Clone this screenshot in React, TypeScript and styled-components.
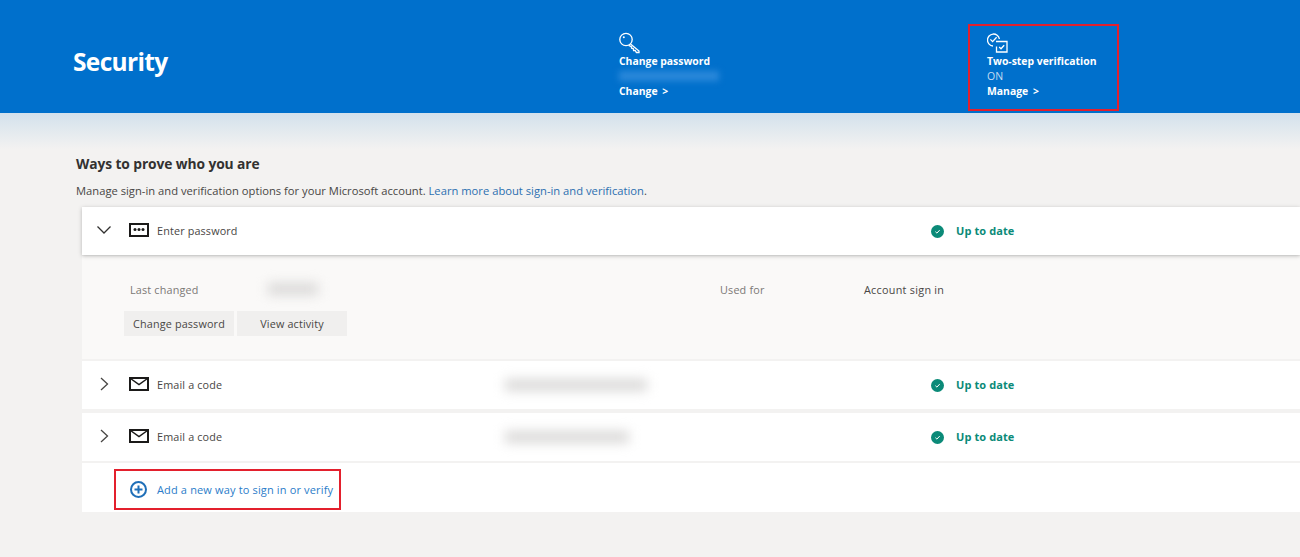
import styled, { createGlobalStyle } from 'styled-components'

const GlobalStyle = createGlobalStyle`
  html, body {
    margin: 0;
    padding: 0;
    background: #f3f2f1;
    font-family: "Open Sans", "Noto Sans", "Liberation Sans", sans-serif;
  }
`

const Page = styled.div`
  width: 1300px;
  height: 557px;
  overflow: hidden;
  background: #f3f2f1;
`

const Banner = styled.header`
  height: 113px;
  background: #0070cc;
  display: grid;
  grid-template-columns: 546px 368px 1fr;
  color: #fff;
  box-sizing: border-box;
  padding-left: 73px;
`

const PageTitle = styled.h1`
  margin: 0;
  align-self: center;
  font-size: 24.5px;
  font-weight: 700;
  letter-spacing: -0.65px;
  line-height: 34px;
  position: relative;
  top: 5px;
`

const Tile = styled.div`
  padding-top: 32px;
  display: flex;
  flex-direction: column;
  align-items: flex-start;
  font-size: 10.4px;
  line-height: 15px;
`

const OutlinedTile = styled(Tile)`
  position: relative;
  &::after {
    content: '';
    position: absolute;
    left: -19px;
    top: 24px;
    width: 147px;
    height: 83px;
    border: 2px solid #e3202d;
  }
`

const TileIcon = styled.svg`
  width: 22px;
  height: 22px;
  display: block;
`

const TileTitle = styled.div`
  font-weight: 700;
  height: 15px;
`

const TileValue = styled.div`
  height: 15px;
  color: #c5dcf2;
  font-size: 10.5px;
`

const BlurredLine = styled.div`
  width: 100px;
  height: 10px;
  margin: 2px 0 3px 0;
  background: #2a88da;
  filter: blur(3px);
`

const TileLink = styled.div`
  font-weight: 700;
  word-spacing: 2px;
`

const BannerFade = styled.div`
  height: 36px;
  background: linear-gradient(#d3e1ec, #f3f2f1);
`

const Content = styled.main`
  padding-left: 76px;
`

const SectionTitle = styled.h2`
  margin: 5px 0 0;
  font-size: 13.8px;
  line-height: 20px;
  font-weight: 700;
  letter-spacing: -0.1px;
  color: #323130;
`

const Intro = styled.p`
  margin: 9px 0 0;
  font-size: 11.2px;
  line-height: 16px;
  letter-spacing: 0.01px;
  color: #484644;
`

const Anchor = styled.a`
  color: #2b6fb0;
`

const List = styled.div`
  margin: 8px 0 0 6px;
  display: flex;
  flex-direction: column;
`

const Row = styled.div<{ $raised?: boolean }>`
  height: 48px;
  background: #fff;
  display: grid;
  grid-template-columns: 47px 28px 348px 426px 25px 1fr;
  align-items: center;
  font-size: 10.8px;
  color: #484644;
  box-shadow: ${({ $raised }) => ($raised ? '0 1px 4px rgba(0, 0, 0, 0.25)' : 'none')};
  position: relative;
  margin-bottom: ${({ $raised }) => ($raised ? '0' : '4px')};
`

const Chevron = styled.svg`
  width: 14px;
  height: 14px;
  justify-self: center;
  position: relative;
  left: -2px;
  top: -1px;
`

const MethodIcon = styled.svg`
  width: 20px;
  height: 14px;
  position: relative;
  top: -1px;
`

const Label = styled.span`
  color: #484644;
  letter-spacing: 0.15px;
  position: relative;
  top: -1px;
`

const Redacted = styled.div<{ $width: number }>`
  width: ${({ $width }) => $width}px;
  height: 12px;
  background: #dad9d8;
  filter: blur(6px);
`

const StatusDot = styled.svg`
  width: 13px;
  height: 13px;
`

const StatusText = styled.span`
  font-size: 11px;
  font-weight: 700;
  letter-spacing: 0.1px;
  color: #0b8a78;
  position: relative;
  top: -1px;
`

const Details = styled.div`
  height: 103px;
  background: #faf9f8;
  margin: 1px 0 2px;
  padding: 25px 0 0 42px;
  box-sizing: border-box;
  font-size: 10.8px;
  letter-spacing: 0.18px;
`

const DetailFacts = styled.div`
  display: grid;
  grid-template-columns: 138px 452px 144px 1fr;
  align-items: center;
  height: 16px;
  padding-left: 6px;
`

const FactLabel = styled.span`
  color: #7a7876;
`

const FactValue = styled.span`
  color: #484644;
  letter-spacing: 0.28px;
`

const DetailButtons = styled.div`
  margin-top: 14px;
  display: flex;
  gap: 3px;
`

const GrayButton = styled.button`
  width: 110px;
  height: 25px;
  border: 0;
  padding: 0;
  background: #f0efee;
  color: #484644;
  font: inherit;
  letter-spacing: 0.15px;
`

const AddRow = styled.div`
  height: 49px;
  background: #fff;
  margin-top: -2px;
  padding: 6px 0 0 32px;
  box-sizing: border-box;
`

const AddLink = styled.a`
  border: 2px solid #e3202d;
  display: flex;
  align-items: center;
  gap: 10px;
  padding-left: 14px;
  box-sizing: border-box;
  width: 227px;
  height: 41px;
  font-size: 11px;
  letter-spacing: 0.15px;
  color: #2b7cc9;
`

const Check = () => (
  <StatusDot viewBox="0 0 13 13">
    <circle cx="6.5" cy="6.5" r="6.5" fill="#0b8a78" />
    <path d="M4.4 6.7l1.5 1.4 2.8-3" fill="none" stroke="#fff" strokeWidth="1" />
  </StatusDot>
)

const Mail = () => (
  <MethodIcon viewBox="0 0 20 14">
    <rect x="1" y="1" width="18" height="12" fill="none" stroke="#1b1a19" strokeWidth="2" />
    <path d="M1.5 1.5L10 7.5l8.5-6" fill="none" stroke="#1b1a19" strokeWidth="1.5" />
  </MethodIcon>
)

const ChevronRight = () => (
  <Chevron viewBox="0 0 14 14">
    <path d="M4 1l6.5 6L4 13" fill="none" stroke="#484644" strokeWidth="1.3" />
  </Chevron>
)

const ChevronDown = () => (
  <Chevron viewBox="0 0 14 14">
    <path d="M0.5 3.5L7 10l6.5-6.5" fill="none" stroke="#323130" strokeWidth="1.3" />
  </Chevron>
)

export default function App() {
  return (
    <Page>
      <GlobalStyle />
      <Banner>
        <PageTitle>Security</PageTitle>
        <Tile>
          <TileIcon viewBox="0 0 22 22" fill="none" stroke="#fff" strokeWidth="1.3">
            <circle cx="7" cy="7.5" r="6.2" />
            <circle cx="4.8" cy="5.2" r="1" fill="#fff" stroke="none" />
            <path d="M11.5 12l8.5 7v1.5h-2.6l-1.2-2h-1.6l-.4-2-1.6-.3-.3-1.6-2.6-1.3" />
          </TileIcon>
          <TileTitle>Change password</TileTitle>
          <BlurredLine />
          <TileLink>Change &gt;</TileLink>
        </Tile>
        <OutlinedTile>
          <TileIcon viewBox="0 0 22 22" fill="none" stroke="#fff" strokeWidth="1.3">
            <path d="M6 14a6 6 0 1 1 6.4-7" />
            <path d="M3.4 7.4l2.2 2.2 4-4.4" />
            <path d="M9 9.5h11V20H9.5v-5.5" />
            <path d="M12.2 15l1.8 1.8 3.2-3.6" />
          </TileIcon>
          <TileTitle>Two-step verification</TileTitle>
          <TileValue>ON</TileValue>
          <TileLink>Manage &gt;</TileLink>
        </OutlinedTile>
      </Banner>
      <BannerFade />
      <Content>
        <SectionTitle>Ways to prove who you are</SectionTitle>
        <Intro>
          Manage sign-in and verification options for your Microsoft account.{' '}
          <Anchor>Learn more about sign-in and verification</Anchor>.
        </Intro>
        <List>
          <Row $raised>
            <ChevronDown />
            <MethodIcon viewBox="0 0 20 14">
              <rect x="1" y="1" width="18" height="12" fill="none" stroke="#1b1a19" strokeWidth="2" />
              <circle cx="6" cy="6.5" r="1.5" fill="#1b1a19" />
              <circle cx="10" cy="6.5" r="1.5" fill="#1b1a19" />
              <circle cx="14" cy="6.5" r="1.5" fill="#1b1a19" />
            </MethodIcon>
            <Label>Enter password</Label>
            <span />
            <Check />
            <StatusText>Up to date</StatusText>
          </Row>
          <Details>
            <DetailFacts>
              <FactLabel>Last changed</FactLabel>
              <Redacted $width={50} />
              <FactLabel>Used for</FactLabel>
              <FactValue>Account sign in</FactValue>
            </DetailFacts>
            <DetailButtons>
              <GrayButton>Change password</GrayButton>
              <GrayButton>View activity</GrayButton>
            </DetailButtons>
          </Details>
          <Row>
            <ChevronRight />
            <Mail />
            <Label>Email a code</Label>
            <Redacted $width={142} />
            <Check />
            <StatusText>Up to date</StatusText>
          </Row>
          <Row>
            <ChevronRight />
            <Mail />
            <Label>Email a code</Label>
            <Redacted $width={124} />
            <Check />
            <StatusText>Up to date</StatusText>
          </Row>
          <AddRow>
            <AddLink>
              <svg width="17" height="17" viewBox="0 0 17 17" fill="none" stroke="#1f6fb8" strokeWidth="2">
                <circle cx="8.5" cy="8.5" r="7.5" />
                <path d="M8.5 4.5v8M4.5 8.5h8" />
              </svg>
              Add a new way to sign in or verify
            </AddLink>
          </AddRow>
        </List>
      </Content>
    </Page>
  )
}
